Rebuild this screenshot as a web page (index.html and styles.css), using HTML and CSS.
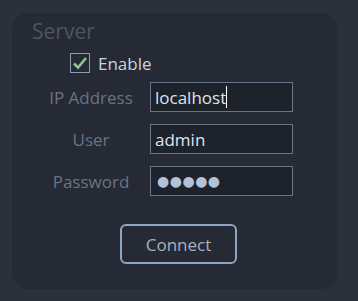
FILE: index.html
```html
<!DOCTYPE html>
<html lang="en">
<head>
    <meta charset="UTF-8">
    <title>Server</title>
    <link rel="stylesheet" href="styles.css">
</head>
<body>
    <div class="panel">
        <div class="title">Server</div>
        <label class="check-row">
            <span class="checkbox">
                <svg width="18" height="18" viewBox="0 0 18 18"><path d="M3 9.5 L7 13.5 L15 4" fill="none" stroke="#93c193" stroke-width="2.6"/></svg>
            </span>
            <span class="check-label">Enable</span>
        </label>
        <div class="form">
            <div class="label">IP Address</div>
            <div class="field">localhost<span class="caret"></span></div>
            <div class="label">User</div>
            <div class="field">admin</div>
            <div class="label">Password</div>
            <div class="field dots">●●●●●</div>
        </div>
        <div class="actions">
            <button class="connect">Connect</button>
        </div>
    </div>
</body>
</html>
```

FILE: styles.css
```css
* {
    font-family: "Open Sans", "Noto Sans", sans-serif;
    box-sizing: border-box;
}
body {
    margin: 0;
    height: 301px;
    background: #2b303b;
    padding: 13px 20px 0 12px;
}
.panel {
    background: #252a35;
    border-radius: 16px;
    height: 276px;
    padding: 4px 0 0 20px;
}
.title {
    font-size: 21px;
    line-height: 28px;
    color: #4d5465;
}
.check-row {
    display: flex;
    align-items: center;
    margin: 8px 0 0 38px;
    height: 20px;
}
.checkbox {
    width: 20px;
    height: 20px;
    border: 1px solid #8d9bb0;
    display: flex;
    align-items: center;
    justify-content: center;
}
.check-label {
    margin-left: 8px;
    font-size: 17px;
    color: #c8d2e2;
}
.form {
    display: grid;
    grid-template-columns: 106px 143px;
    column-gap: 6px;
    row-gap: 12px;
    margin: 9px 0 0 6px;
    align-items: center;
}
.label {
    text-align: center;
    font-size: 17px;
    color: #6b7384;
}
.field {
    height: 30px;
    border: 1px solid #69758a;
    background: #1e222b;
    color: #dfe5ee;
    font-size: 17px;
    line-height: 27px;
    padding-left: 4px;
    display: flex;
    align-items: center;
}
.caret {
    width: 1px;
    height: 22px;
    background: #ffffff;
}
.dots {
    font-family: "DejaVu Sans", sans-serif;
    font-size: 14px;
    letter-spacing: 0.5px;
    color: #b3c2d8;
    padding-left: 6px;
}
.actions {
    padding: 28px 0 0 88px;
}
.connect {
    width: 117px;
    height: 40px;
    background: transparent;
    border: 2px solid #8ea5c3;
    border-radius: 6px;
    color: #a9b1bd;
    font-size: 17px;
}
```
